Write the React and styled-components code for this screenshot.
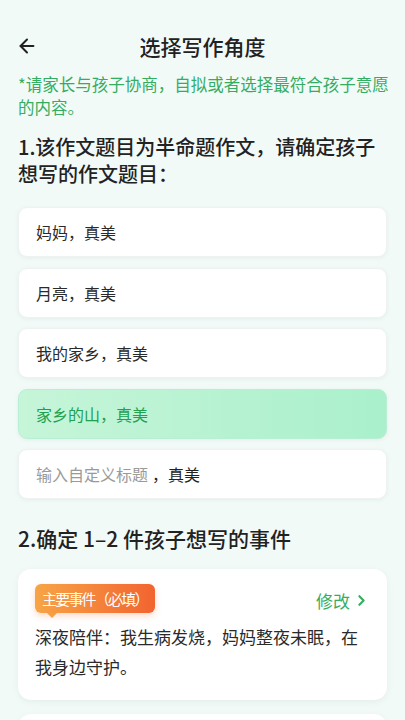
import styled, { createGlobalStyle } from "styled-components";
import { ArrowLeft, ChevronRight } from "lucide-react";

const Green = "#34ad62";

const GlobalStyle = createGlobalStyle`
  body {
    margin: 0;
    background: #f2faf8;
    font-family: "Noto Sans CJK SC", "Noto Sans", sans-serif;
    color: #222;
  }
`;

const titles = ["妈妈，真美", "月亮，真美", "我的家乡，真美", "家乡的山，真美"];

const App = () => {
  return (
    <S.Page>
      <GlobalStyle />
      <S.Header>
        <S.Back>
          <ArrowLeft size={22} strokeWidth={2.2} />
        </S.Back>
        <S.Title>选择写作角度</S.Title>
      </S.Header>
      <S.Notice>*请家长与孩子协商，自拟或者选择最符合孩子意愿的内容。</S.Notice>
      <S.Heading>1.该作文题目为半命题作文，请确定孩子想写的作文题目：</S.Heading>
      <S.List>
        {titles.map((t, i) => (
          <S.Option key={t} $active={i === 3}>
            {t}
          </S.Option>
        ))}
        <S.Option>
          <S.Placeholder>输入自定义标题</S.Placeholder>
          <S.Suffix>，真美</S.Suffix>
        </S.Option>
      </S.List>
      <S.Heading2>2.确定 1–2 件孩子想写的事件</S.Heading2>
      <S.EventCard>
        <S.EventTop>
          <S.Badge>主要事件（必填）</S.Badge>
          <S.Edit>
            修改
            <ChevronRight size={17} strokeWidth={3} />
          </S.Edit>
        </S.EventTop>
        <S.EventText>深夜陪伴：我生病发烧，妈妈整夜未眠，在我身边守护。</S.EventText>
      </S.EventCard>
      <S.EventCard />
    </S.Page>
  );
};

const S = {
  Page: styled.div`
    padding: 0 18px;
    height: 720px;
    overflow: hidden;
    box-sizing: border-box;
  `,
  Header: styled.div`
    position: relative;
    height: 46px;
    margin-top: 23px;
    display: flex;
    align-items: center;
    justify-content: center;
  `,
  Back: styled.div`
    position: absolute;
    left: -2px;
    top: 12px;
    display: flex;
    color: #222;
  `,
  Title: styled.div`
    font-size: 21px;
    font-weight: 500;
    color: #222;
  `,
  Notice: styled.div`
    margin-top: 4px;
    font-size: 16.5px;
    line-height: 23px;
    color: ${Green};
    margin-right: -6px;
  `,
  Heading: styled.div`
    margin-top: 14px;
    font-size: 20px;
    line-height: 27px;
    font-weight: 500;
    color: #222;
    margin-right: -6px;
  `,
  List: styled.div`
    margin-top: 20px;
    display: flex;
    flex-direction: column;
    gap: 10.5px;
  `,
  Option: styled.div`
    height: 50px;
    box-sizing: border-box;
    border-radius: 9px;
    padding: 0 17px;
    display: flex;
    align-items: center;
    font-size: 16px;
    color: ${(p) => (p.$active ? "#22a050" : "#2a2a2a")};
    background: ${(p) =>
      p.$active ? "linear-gradient(90deg, #c6f5d8, #aaf0cd)" : "#fff"};
    box-shadow: 0 1px 4px rgba(120, 160, 150, 0.12);
    border: 1px solid ${(p) => (p.$active ? "#b8efd3" : "#eef3f2")};
  `,
  Placeholder: styled.span`
    color: #9a9a9a;
  `,
  Suffix: styled.span`
    margin-left: 4px;
    color: #222;
  `,
  Heading2: styled.div`
    margin-top: 25px;
    font-size: 21px;
    line-height: 28px;
    font-weight: 500;
    color: #222;
  `,
  EventCard: styled.div`
    margin-top: 17px;
    background: #fff;
    border-radius: 13px;
    padding: 15px 17px 18px;
    min-height: 127px;
    box-sizing: border-box;
    box-shadow: 0 2px 6px rgba(120, 160, 150, 0.12);
    margin-bottom: -3px;
  `,
  EventTop: styled.div`
    display: flex;
    align-items: flex-start;
    justify-content: space-between;
  `,
  Badge: styled.div`
    position: relative;
    height: 29px;
    padding: 0 7px;
    border-radius: 6px;
    display: flex;
    align-items: center;
    font-size: 15px;
    letter-spacing: -1.8px;
    color: #fff;
    background: linear-gradient(90deg, #f7a446, #f26430);
    box-shadow: 0 3px 6px rgba(242, 110, 50, 0.25);
    &::after {
      content: "";
      position: absolute;
      left: 12px;
      bottom: -5px;
      border-left: 5px solid transparent;
      border-right: 5px solid transparent;
      border-top: 5px solid #f6a044;
    }
  `,
  Edit: styled.div`
    display: flex;
    align-items: center;
    gap: 3px;
    margin-top: 4px;
    font-size: 17px;
    color: ${Green};
  `,
  EventText: styled.div`
    margin-top: 9px;
    font-size: 17px;
    line-height: 30px;
    color: #2a2a2a;
  `,
};

export default App;
